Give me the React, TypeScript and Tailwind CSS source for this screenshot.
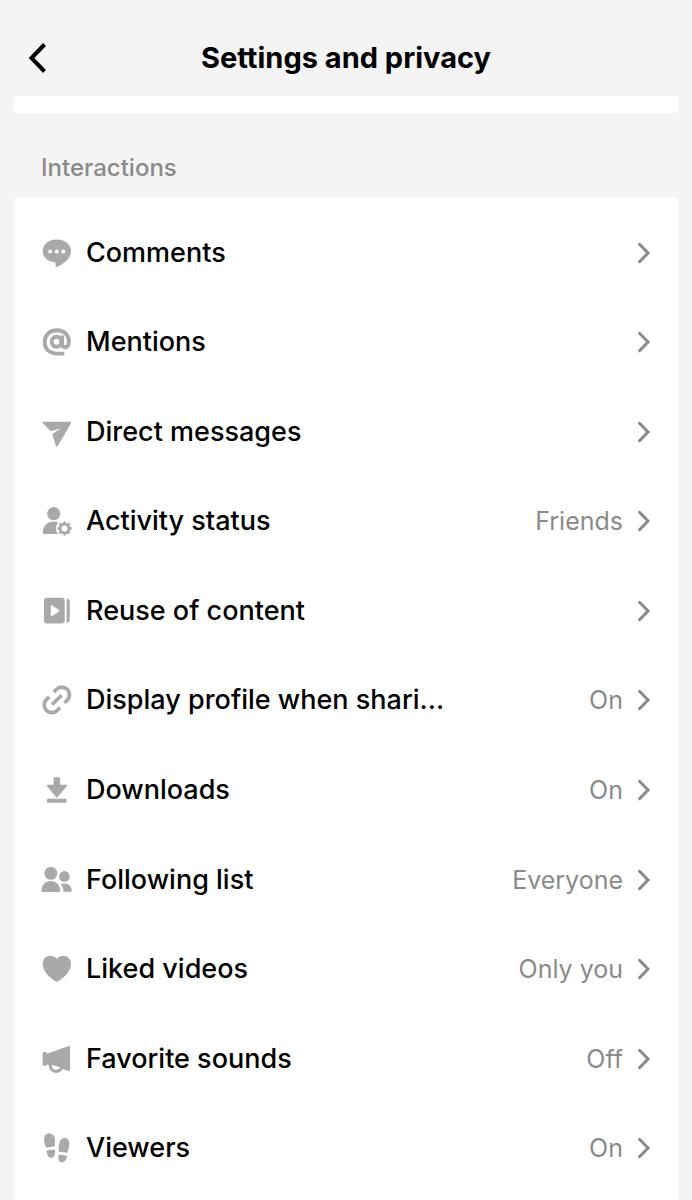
import { useState, type ReactNode } from "react";

type Setting = {
  label: string;
  value?: string;
  icon: ReactNode;
};

const SETTINGS: Setting[] = [
  {
    label: "Comments",
    icon: (
      <>
        <path d="M15.8 2.4C7.6 2.4 1.7 7.2 1.7 14c0 6.4 5.4 10.9 12.9 11.4v3.5c0 .9.8 1.3 1.6.9C23 26.6 30 21.6 30 14 30 7.2 24 2.400 15.800 2.400Z" />
        <g fill="#fff">
          <circle cx="9.200" cy="14.400" r="2" />
          <circle cx="15.800" cy="14.400" r="2" />
          <circle cx="22.400" cy="14.400" r="2" />
        </g>
      </>
    ),
  },
  {
    label: "Mentions",
    icon: (
      <g fill="none" stroke="currentColor" strokeWidth="3.9">
        <path d="M23.300 27.600h-7.100C8.500 27.600 3.700 23 3.700 16S8.500 4.300 15.800 4.300s12 4.500 12 10.900c0 4-1.500 6-3.700 6-2 0-3-1.200-3-3.400V9.400" />
        <ellipse cx="15.500" cy="15.800" rx="4.800" ry="5" />
      </g>
    ),
  },
  {
    label: "Direct messages",
    icon: (
      <path d="M2.600 5.800h26.500c.8 0 1.300.8.9 1.500L16.800 30c-.5.9-1.700.8-2-.2L11.200 18 20 12.400 9.500 15 2 7.300c-.6-.6-.2-1.500.6-1.500Z" />
    ),
  },
  {
    label: "Activity status",
    value: "Friends",
    icon: (
      <>
        <circle cx="12.700" cy="8.600" r="6.600" />
        <path d="M1.700 27.200C2 21 6.400 16.500 12.700 16.500h3.600L20 29H3.400c-1.100 0-1.700-.7-1.700-1.800Z" />
        <circle cx="23.500" cy="23.400" r="8.600" fill="#fff" />
        <g fill="none" stroke="currentColor">
          <circle cx="23.500" cy="23.400" r="4.500" strokeWidth="3" />
          <circle cx="23.500" cy="23.400" r="6.400" strokeWidth="1.700" pathLength="16" strokeDasharray=".8 1.2" strokeDashoffset=".4" />
        </g>
      </>
    ),
  },
  {
    label: "Reuse of content",
    icon: (
      <>
        <rect x="3" y="2.800" width="20.700" height="25.700" rx="3" />
        <path d="M9.700 11.200c0-.8.8-1.200 1.400-.8l6.900 4.700c.5.300.5 1 0 1.400l-6.900 4.700c-.6.4-1.400 0-1.400-.8Z" fill="#fff" />
        <path d="M25.600 3.200c1.900.4 3.200 2 3.200 3.900v17.100c0 1.900-1.300 3.500-3.200 3.900Z" />
      </>
    ),
  },
  {
    label: "Display profile when shari...",
    value: "On",
    icon: (
      <g fill="none" stroke="currentColor" strokeWidth="3.700">
        <path d="m12.700 8.100 2.600-2.600a7.640 7.640 0 1 1 10.800 10.800l-2.600 2.600" />
        <path d="m8.200 12.800-2.600 2.600a7.640 7.640 0 1 0 10.800 10.800l2.600-2.600" />
        <path d="m11.200 20.500 9.300-9.300" />
      </g>
    ),
  },
  {
    label: "Downloads",
    value: "On",
    icon: (
      <>
        <path d="M13.300 3.200h5.100c.4 0 .7.3.7.7v6.900h6.200c.7 0 1 .8.6 1.300l-9.300 11.200c-.4.4-1 .4-1.400 0L5.900 12.100c-.4-.5-.1-1.300.6-1.300h6.100V3.900c0-.4.3-.7.7-.7Z" />
        <rect x="6" y="24.700" width="19.500" height="4" rx=".8" />
      </>
    ),
  },
  {
    label: "Following list",
    value: "Everyone",
    icon: (
      <>
        <circle cx="9.800" cy="9.300" r="6.500" />
        <path d="M.4 26.200C.8 20.800 4.600 17 9.800 17s9 3.800 9.500 9.200c.1 1-.6 1.800-1.600 1.800H2c-1 0-1.700-.8-1.600-1.800Z" />
        <circle cx="23.400" cy="12.400" r="5.300" />
        <path d="M19.600 20.200c5.500-2.300 11 .8 11.200 6.100 0 .9-.6 1.500-1.500 1.500h-6.900c.2-3-.8-5.600-2.800-7.600Z" />
      </>
    ),
  },
  {
    label: "Liked videos",
    value: "Only you",
    icon: (
      <path d="M15.800 5.800C13.800 3.600 11.600 2.800 9.200 2.800c-4.300 0-7.500 3.500-7.500 8.200 0 7.200 6.400 13.100 12.800 17.300.8.6 1.800.6 2.600 0C23.500 24.100 30 18.200 30 11c0-4.700-3.200-8.200-7.500-8.200-2.500 0-4.800.8-6.700 3Z" />
    ),
  },
  {
    label: "Favorite sounds",
    value: "Off",
    icon: (
      <>
        <path d="M2.300 9.100h2.800c.4 0 .6.3.6.6v1L28 3.100c.6-.2 1.100.2 1.100.8v23.400c0 .6-.5 1-1.100.8L5.700 21.400v.7c0 .4-.3.600-.6.600H2.300c-.4 0-.6-.3-.6-.6V9.700c0-.4.3-.6.6-.6Z" />
        <path d="M10.500 21.800 20 24.400c-.6 1.700-2.400 3-4.800 3-2.900 0-4.700-2.200-4.700-5.600Z" fill="#fff" />
        <path d="M9.400 21.500c-.5 3.900 2 6.900 5.600 6.900 2.800 0 5-1.500 5.800-4.100" fill="none" stroke="currentColor" strokeWidth="3" />
      </>
    ),
  },
  {
    label: "Viewers",
    value: "On",
    icon: (
      <>
        <path d="M4.900 15.600C3.600 11.800 2.900 9.200 3 7c.2-3.300 2.100-5.500 5.100-5.500 3.400 0 5.600 2.300 5.900 6 .1 2.400-.1 4.600-.5 7.100Z" />
        <path d="M5.700 18.500l8.200-.9c.6 4.700-.7 8.100-3.600 8.200-2.700.1-4.400-2.400-4.600-7.300Z" />
        <path d="M18 19.800c-.4-2.500-.4-4.700-.1-7.100.5-4.300 2.800-6.900 6-6.800 3 .1 4.600 2.600 4.400 5.900-.1 3.100-.9 5.900-2 8.900Z" />
        <path d="M17.800 22.600l8.300 1.200c-.7 4.300-2.700 6.800-5.400 6.600-2.900-.2-4.100-3.300-2.900-7.800Z" />
      </>
    ),
  },
];

function Row({ setting, active, onSelect }: { setting: Setting; active: boolean; onSelect: () => void }) {
  return (
    <li className="flex">
      <button
        type="button"
        onClick={onSelect}
        aria-current={active}
        className="flex w-full items-center px-[27px] text-left"
      >
        <svg viewBox="0 0 32 32" fill="currentColor" className="h-8 w-8 shrink-0 text-[#a9a9a9]" aria-hidden="true">
          {setting.icon}
        </svg>
        <span className="ml-[13px] min-w-0 flex-1 truncate text-[27px] leading-9 font-medium text-black">
          {setting.label}
        </span>
        {setting.value && (
          <span className="ml-4 shrink-0 text-[25px] leading-9 text-[#8a8a8a]">{setting.value}</span>
        )}
        <svg viewBox="0 0 14 22" fill="none" className="ml-[14px] h-[22px] w-[14px] shrink-0 text-[#8a8a8a]" aria-hidden="true">
          <path d="M2.500 2.300 11 11l-8.500 8.700" stroke="currentColor" strokeWidth="3" strokeLinecap="round" />
        </svg>
      </button>
    </li>
  );
}

export default function App() {
  const [selected, setSelected] = useState<string | null>(null);

  return (
    <div className="flex min-h-screen flex-col bg-[#f4f4f4] font-['Inter','Liberation_Sans',sans-serif]">
      <header className="grid h-24 grid-cols-[64px_1fr_64px] items-center pt-5">
        <button type="button" aria-label="Back" className="flex h-12 items-center pl-7">
          <svg viewBox="0 0 20 32" fill="none" className="h-8 w-5" aria-hidden="true">
            <path d="M16.500 2.500 3.500 16l13 13.500" stroke="#000" strokeWidth="4" />
          </svg>
        </button>
        <h1 className="text-center text-[29px] leading-9 font-bold text-black">Settings and privacy</h1>
      </header>

      <main className="flex flex-1 flex-col px-[14px]">
        {/* tail of the previous section, scrolled under the header */}
        <div className="h-[17px] rounded-b-[4px] bg-white" />

        <h2 className="mt-[39px] px-[27px] text-[24px] leading-8 font-medium text-[#8a8a8a]">Interactions</h2>

        <section className="mt-[13px] flex-1 rounded-t-[4px] bg-white pt-[11px]">
          <ul className="grid min-h-[985px] auto-rows-fr">
            {SETTINGS.map((s) => (
              <Row
                key={s.label}
                setting={s}
                active={selected === s.label}
                onSelect={() => setSelected(s.label)}
              />
            ))}
          </ul>
        </section>
      </main>
    </div>
  );
}
